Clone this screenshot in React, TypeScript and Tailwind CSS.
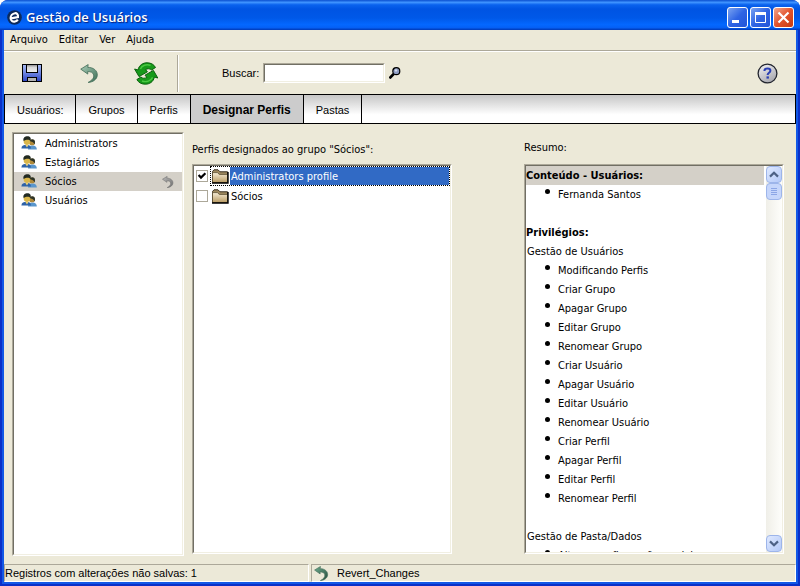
import { useState } from "react";

const UI = "font-['DejaVu_Sans_Condensed','DejaVu_Sans',sans-serif]";
const SANS = "font-['Liberation_Sans',Arial,sans-serif]";
const SUNKEN = "border border-t-[#aca899] border-l-[#aca899] border-r-white border-b-white";
const SUNKEN_INNER = "border border-t-[#716f64] border-l-[#716f64] border-r-[#f1efe2] border-b-[#f1efe2] bg-white";

function LogoIcon() {
  return (
    <svg width="15" height="15" viewBox="0 0 15 15" aria-hidden="true">
      <circle cx="7.5" cy="7.5" r="7.3" fill="#0b2a5c" />
      <path d="M4 8.4 L11 7 C11.4 4 9.6 3 8 3.2 C5.4 3.5 3.5 5.8 3.6 8.2 C3.7 11 6 12 8 11.5 C9.3 11.2 10.3 10.4 10.8 9.6" fill="none" stroke="#fff" strokeWidth="2.1" />
    </svg>
  );
}

function SaveIcon() {
  return (
    <svg width="20" height="18" viewBox="0 0 20 18" aria-hidden="true">
      <defs>
        <linearGradient id="disk" x1="0" y1="0" x2="0" y2="1">
          <stop offset="0" stopColor="#a9bcf2" />
          <stop offset="0.5" stopColor="#6d84e0" />
          <stop offset="1" stopColor="#2b42c0" />
        </linearGradient>
        <linearGradient id="shutter" x1="0" y1="0" x2="0" y2="1">
          <stop offset="0" stopColor="#808080" />
          <stop offset="0.35" stopColor="#d6d6d6" />
          <stop offset="1" stopColor="#f0f0f0" />
        </linearGradient>
      </defs>
      <rect x="0.5" y="0.5" width="19" height="17" fill="url(#disk)" stroke="#000" />
      <rect x="4.5" y="0.5" width="11" height="8" fill="url(#shutter)" stroke="#000" />
      <rect x="5.5" y="13.5" width="9" height="4" fill="#b4b4b4" stroke="#000" />
    </svg>
  );
}

function UndoIcon({ size, from, to, stroke }: { size: number; from: string; to: string; stroke: string }) {
  const id = "undo" + size;
  return (
    <svg width={size} height={size} viewBox="0 0 20 20" aria-hidden="true">
      <defs>
        <linearGradient id={id} x1="0" y1="0" x2="1" y2="1">
          <stop offset="0" stopColor={from} />
          <stop offset="1" stopColor={to} />
        </linearGradient>
      </defs>
      <path
        d="M0.8 5.4 L8.6 0.6 L8.2 3.6 C14 3.4 18.6 7 18.2 12 C17.8 16 14 19 8.6 19.4 C13 17 15 14.6 14.4 11.6 C13.8 9 11.4 7.8 8 8 L8.2 10.6 Z"
        fill={`url(#${id})`}
        stroke={stroke}
        strokeWidth="0.9"
      />
    </svg>
  );
}

function RefreshIcon() {
  const arrow = "M0.6 7 L4 8 C5 3 9 0.8 13 0.8 C17 0.8 20 2.5 21.5 5.5 L17.5 8 C16 6.4 13.5 6.4 11.5 7.6 L13.4 9.8 L5 14.6 Z";
  return (
    <svg width="25" height="23" viewBox="0 0 25 23" aria-hidden="true">
      <g fill="#179a1a" stroke="#0a5f0d" strokeLinejoin="round">
        <path d={arrow} />
        <path d={arrow} transform="rotate(180 12.2 11.5)" />
      </g>
      <path d="M6.4 7 C8 3.2 12.4 2 16.6 3.4 M18.6 15.4 C17 19 12.4 20.6 8 19" fill="none" stroke="#4cc843" strokeWidth="1.4" />
    </svg>
  );
}

function SearchIcon() {
  return (
    <svg width="12" height="12" viewBox="0 0 12 12" aria-hidden="true">
      <path d="M1.4 10.4 L5 6.6" stroke="#000" strokeWidth="2.8" strokeLinecap="round" />
      <circle cx="7.3" cy="4.2" r="3.5" fill="#8e9cc0" stroke="#000" strokeWidth="1.2" />
      <circle cx="7" cy="3.4" r="1.2" fill="#d3dbee" />
    </svg>
  );
}

function HelpIcon() {
  return (
    <svg width="21" height="21" viewBox="0 0 21 21" aria-hidden="true">
      <defs>
        <linearGradient id="helpFill" x1="0" y1="0" x2="0.6" y2="1">
          <stop offset="0" stopColor="#f6f6f8" />
          <stop offset="1" stopColor="#a9a9b0" />
        </linearGradient>
      </defs>
      <circle cx="10.5" cy="10.5" r="9.4" fill="url(#helpFill)" stroke="#22252e" strokeWidth="1.3" />
      <path d="M7.4 8 C7.4 5.9 9 5.6 10.6 5.6 C12.4 5.6 13.4 6.4 13.4 7.8 C13.4 9.8 10.6 9.8 10.6 12" fill="none" stroke="#2a3fb4" strokeWidth="2" />
      <rect x="9.5" y="13.4" width="2.4" height="2.2" fill="#2a3fb4" />
    </svg>
  );
}

function UsersIcon() {
  return (
    <svg width="16" height="14" viewBox="0 0 16 14" aria-hidden="true" className="mb-0.5 shrink-0">
      <path d="M7 13.6 C7 10 9 9.4 11.4 9.4 C14 9.4 15.8 10.4 15.8 13.6 Z" fill="#5a96cc" />
      <circle cx="11" cy="6.4" r="2.9" fill="#b08a3a" />
      <path d="M8.4 5.6 C8.6 2.6 13.8 2.2 14 5.8 C14 7 13.8 8 13.2 8.6 C13 6.8 12 5.4 8.4 5.6 Z" fill="#2c3328" />
      <path d="M0.4 12.4 C0.6 9.6 2.8 8.8 5.4 8.8 C8 8.8 9.8 9.8 10 12.4 Z" fill="#2d62a8" />
      <path d="M4.2 8.8 L6 11.4 L7.6 8.8 Z" fill="#e8d27a" />
      <circle cx="6" cy="5.6" r="3.3" fill="#d9b64a" />
      <path d="M2.6 5 C1.6 1.6 4.4 0.2 6.4 0.2 C9 0.2 10.6 2 9.4 5 C8.4 3.4 5.4 3 2.6 5 Z" fill="#222a22" />
    </svg>
  );
}

function FolderIcon() {
  return (
    <svg width="17" height="15" viewBox="0 0 17 15" aria-hidden="true">
      <defs>
        <linearGradient id="folder" x1="0" y1="0" x2="0" y2="1">
          <stop offset="0" stopColor="#f6ecd6" />
          <stop offset="1" stopColor="#b89a62" />
        </linearGradient>
      </defs>
      <path d="M0.5 13.5 V2.5 L2 0.8 H6 L8 2.8 H15.5 V13.5 Z" fill="#a08a60" stroke="#3a3020" />
      <path d="M0.5 13.5 V3.6 H5.4 L7.4 5.4 H15.5 V13.5 Z" fill="url(#folder)" stroke="#5a4c30" strokeWidth="0.8" />
      <path d="M0 14 H16 V3" fill="none" stroke="#000" strokeWidth="1.4" />
    </svg>
  );
}

function Chevron({ up }: { up?: boolean }) {
  return (
    <svg width="10" height="7" viewBox="0 0 10 7" aria-hidden="true">
      <path d={up ? "M1 5.6 L5 1.8 L9 5.6" : "M1 1.4 L5 5.2 L9 1.4"} fill="none" stroke="#4d6185" strokeWidth="2.2" />
    </svg>
  );
}

const menus = ["Arquivo", "Editar", "Ver", "Ajuda"];
const tabs = ["Usuários:", "Grupos", "Perfis", "Designar Perfis", "Pastas"];
const groups = ["Administrators", "Estagiários", "Sócios", "Usuários"];
const privileges = [
  "Modificando Perfis",
  "Criar Grupo",
  "Apagar Grupo",
  "Editar Grupo",
  "Renomear Grupo",
  "Criar Usuário",
  "Apagar Usuário",
  "Editar Usuário",
  "Renomear Usuário",
  "Criar Perfil",
  "Apagar Perfil",
  "Editar Perfil",
  "Renomear Perfil",
];

function BulletList({ items }: { items: string[] }) {
  return (
    <ul>
      {items.map((t) => (
        <li key={t} className="flex h-[19px] items-center pl-[19px]">
          <span className="mb-1.5 mr-2 size-[5px] rounded-full bg-black" />
          <span className="whitespace-nowrap">{t}</span>
        </li>
      ))}
    </ul>
  );
}

function TitleBar() {
  const btn = "flex size-[21px] items-center justify-center rounded-[3px] border border-white";
  const blue = "bg-linear-to-br from-[#7ba2f0] via-[#2f64e4] to-[#2254d8]";
  return (
    <header className="flex h-[30px] shrink-0 items-center bg-[linear-gradient(to_bottom,#0a4fd0_0%,#3f93ff_8%,#0a62ee_16%,#0054e3_30%,#0058e8_60%,#0468ff_82%,#0560f5_92%,#0038b4_100%)] pl-[7px] pr-1.5 pt-1">
      <LogoIcon />
      <h1 className="ml-1 flex-1 font-['Open_Sans',sans-serif] text-[13px] font-semibold leading-4 text-white [text-shadow:1px_1px_1px_#0a1f7a]">
        Gestão de Usuários
      </h1>
      <div className="flex gap-0.5">
        <button aria-label="Minimizar" className={`${btn} ${blue}`}>
          <svg width="13" height="13" viewBox="0 0 13 13"><rect x="1" y="9" width="7" height="3" fill="#fff" /></svg>
        </button>
        <button aria-label="Maximizar" className={`${btn} ${blue}`}>
          <svg width="13" height="13" viewBox="0 0 13 13"><path d="M1.5 3 V11.5 H11.5 V3" fill="none" stroke="#fff" /><rect x="1" y="1" width="11" height="3" fill="#fff" /></svg>
        </button>
        <button aria-label="Fechar" className={`${btn} bg-linear-to-br from-[#f0a58c] via-[#e2532c] to-[#c83a10]`}>
          <svg width="13" height="13" viewBox="0 0 13 13"><path d="M1.5 1.5 L11.5 11.5 M11.5 1.5 L1.5 11.5" stroke="#fff" strokeWidth="2.2" /></svg>
        </button>
      </div>
    </header>
  );
}

function Toolbar() {
  return (
    <div className="flex h-[42px] shrink-0 items-center pl-[18px] pr-[18px]">
      <button aria-label="Salvar" className="mr-[38px]"><SaveIcon /></button>
      <button aria-label="Desfazer" className="mr-[35px]">
        <UndoIcon size={19} from="#a9cdb8" to="#3d6e55" stroke="#47705c" />
      </button>
      <button aria-label="Atualizar"><RefreshIcon /></button>
      <div className="ml-[18px] h-[37px] w-0.5 border-l border-r border-l-[#aca899] border-r-white" />
      <label htmlFor="buscar" className={`ml-[43px] mr-1 text-[11px] ${SANS}`}>Buscar:</label>
      <div className={`mr-1 w-[122px] ${SUNKEN}`}>
        <input id="buscar" type="text" className={`block h-[18px] w-full px-1 text-[11px] outline-none ${SUNKEN_INNER}`} />
      </div>
      <button aria-label="Procurar"><SearchIcon /></button>
      <button aria-label="Ajuda" className="ml-auto"><HelpIcon /></button>
    </div>
  );
}

function ProfileRow({ name, selected }: { name: string; selected?: boolean }) {
  const [checked, setChecked] = useState(!!selected);
  const id = "perfil-" + name;
  return (
    <li className="flex h-5 items-center pl-0.5">
      <span className="relative mr-0.5 flex size-3">
        <input
          id={id}
          type="checkbox"
          checked={checked}
          onChange={() => setChecked(!checked)}
          className="size-3 appearance-none border border-[#aca899] bg-white"
        />
        {checked && (
          <svg width="12" height="12" viewBox="0 0 12 12" className="pointer-events-none absolute inset-0">
            <path d="M2.6 5 L5 7.6 L9.4 3.2" fill="none" stroke="#000" strokeWidth="2.2" />
          </svg>
        )}
      </span>
      <label htmlFor={id} className={`flex h-5 flex-1 border border-dotted ${selected ? "border-black" : "border-transparent"}`}>
        <span className="flex w-[19px] items-center justify-center"><FolderIcon /></span>
        <span className={`flex flex-1 items-center pl-px pt-px ${selected ? "bg-[#316ac5] text-white" : ""}`}>{name}</span>
      </label>
    </li>
  );
}

export default function App() {
  return (
    <div className="h-screen bg-white">
      <div className={`flex h-full flex-col overflow-hidden rounded-t-lg bg-[#0a30c8] text-[11px] leading-[14px] text-black ${UI}`}>
        <TitleBar />
        <div className="mx-0.5 mb-0.5 flex min-h-0 flex-1 flex-col border-2 border-t-0 border-[#1258e6] bg-[#ece9d8]">
          <nav className="flex h-5 shrink-0 items-center gap-[11px] pl-1.5">
            {menus.map((m) => <button key={m}>{m}</button>)}
          </nav>
          <hr className="h-0.5 shrink-0 border-b border-t border-b-white border-t-[#aca899]" />
          <Toolbar />
          <div role="tablist" className={`flex h-[30px] shrink-0 border border-black bg-[linear-gradient(to_bottom,#c6c6c6,#ffffff_70%)] ${SANS}`}>
            {tabs.map((t) => {
              const active = t === "Designar Perfis";
              return (
                <button
                  key={t}
                  role="tab"
                  aria-selected={active}
                  className={`border-r border-black px-3 pt-0.5 ${active ? "bg-[#cccccc] text-[12px] font-bold" : ""}`}
                >
                  {t}
                </button>
              );
            })}
          </div>

          <main className="grid min-h-0 flex-1 grid-cols-[172fr_324fr_260fr] grid-rows-1 gap-2 pb-2 pl-2 pr-3 pt-2">
            <div className={`flex min-h-0 ${SUNKEN}`}>
              <ul className={`flex-1 ${SUNKEN_INNER}`}>
                {groups.map((g) => (
                  <li key={g} className={`flex h-[19px] items-center pl-[7px] pr-2 ${g === "Sócios" ? "bg-[#d4d0c8]" : ""}`}>
                    <UsersIcon />
                    <span className="ml-2 flex-1">{g}</span>
                    {g === "Sócios" && <UndoIcon size={12} from="#b8b8b8" to="#707070" stroke="#707070" />}
                  </li>
                ))}
              </ul>
            </div>

            <section className="flex min-h-0 flex-col pb-0.5 pr-16 pt-[11px]">
              <h2 className="mb-[7px]">Perfis designados ao grupo "Sócios":</h2>
              <div className={`flex min-h-0 flex-1 ${SUNKEN}`}>
                <ul className={`flex-1 ${SUNKEN_INNER}`}>
                  <ProfileRow name="Administrators profile" selected />
                  <ProfileRow name="Sócios" />
                </ul>
              </div>
            </section>

            <section className="flex min-h-0 flex-col pb-0.5 pt-[9px]">
              <h2 className="mb-[9px]">Resumo:</h2>
              <div className={`flex min-h-0 flex-1 ${SUNKEN}`}>
                <div className={`flex min-w-0 flex-1 ${SUNKEN_INNER}`}>
                  <div className="min-w-0 flex-1 overflow-hidden leading-[19px]">
                    <h3 className="bg-[#d4d0c8] font-bold">Conteúdo - Usuários:</h3>
                    <BulletList items={["Fernanda Santos"]} />
                    <h3 className="mt-[19px] font-bold">Privilégios:</h3>
                    <p className="pl-px">Gestão de Usuários</p>
                    <BulletList items={privileges} />
                    <p className="mt-[19px] pl-px">Gestão de Pasta/Dados</p>
                    <BulletList items={["Alterar configuração modelo"]} />
                  </div>
                  <div className="ml-0.5 flex w-4 shrink-0 flex-col bg-linear-to-r from-[#f0efe8] to-[#fefefb]">
                    <button aria-label="Rolar para cima" className="flex h-[17px] items-center justify-center rounded-sm border border-[#9db5ea] bg-linear-to-br from-[#dfe9ff] to-[#b4c9f8]">
                      <Chevron up />
                    </button>
                    <div className="flex h-[17px] flex-col items-center justify-center gap-px rounded-sm border border-[#9db5ea] bg-[#c6d6fb]">
                      <span className="h-px w-1.5 bg-[#8ca6e6]" />
                      <span className="h-px w-1.5 bg-[#8ca6e6]" />
                      <span className="h-px w-1.5 bg-[#8ca6e6]" />
                      <span className="h-px w-1.5 bg-[#8ca6e6]" />
                    </div>
                    <button aria-label="Rolar para baixo" className="mt-auto flex h-[17px] items-center justify-center rounded-sm border border-[#9db5ea] bg-linear-to-br from-[#dfe9ff] to-[#b4c9f8]">
                      <Chevron />
                    </button>
                  </div>
                </div>
              </div>
            </section>
          </main>

          <footer className={`flex h-[18px] shrink-0 gap-0.5 ${SANS}`}>
            <div className="flex w-[305px] items-center border border-b-white border-l-[#aca899] border-r-white border-t-[#aca899]">
              Registros com alterações não salvas: 1
            </div>
            <div className="flex flex-1 items-center border border-b-white border-l-[#aca899] border-r-white border-t-[#aca899] pl-0.5">
              <UndoIcon size={15} from="#6fae90" to="#244a3a" stroke="#47705c" />
              <button className="ml-2">Revert_Changes</button>
            </div>
          </footer>
        </div>
      </div>
    </div>
  );
}
